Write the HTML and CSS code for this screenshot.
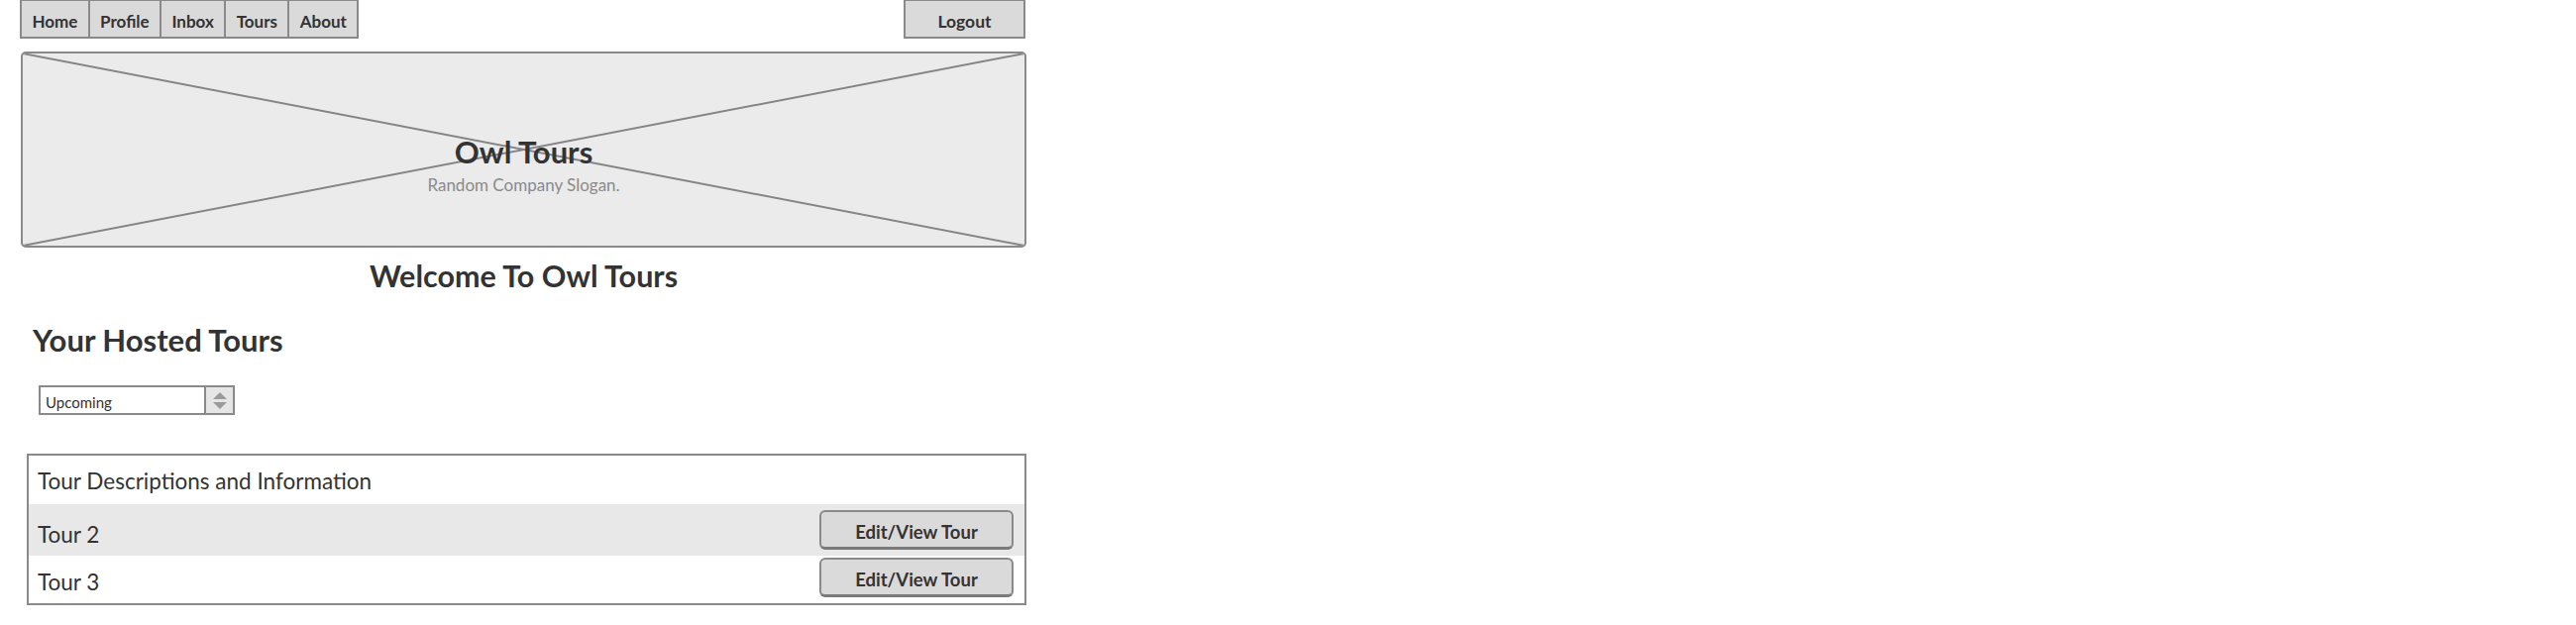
FILE: index.html
```html
<!DOCTYPE html>
<html>
<head>
<meta charset="utf-8">
<link rel="stylesheet" href="styles.css">
</head>
<body>
<div class="page">
  <div class="topbar">
    <nav class="nav">
      <span class="nav-item">Home</span>
      <span class="nav-item">Profile</span>
      <span class="nav-item">Inbox</span>
      <span class="nav-item">Tours</span>
      <span class="nav-item">About</span>
    </nav>
    <span class="logout">Logout</span>
  </div>

  <div class="banner">
    <svg class="banner-x" viewBox="0 0 100 100" preserveAspectRatio="none" aria-hidden="true">
      <line x1="0" y1="0" x2="100" y2="100" vector-effect="non-scaling-stroke"/>
      <line x1="100" y1="0" x2="0" y2="100" vector-effect="non-scaling-stroke"/>
    </svg>
    <div class="banner-title">Owl Tours</div>
    <div class="banner-slogan">Random Company Slogan.</div>
  </div>

  <h1 class="welcome">Welcome To Owl Tours</h1>

  <h2 class="section-title">Your Hosted Tours</h2>

  <div class="select">
    <span class="select-value">Upcoming</span>
    <span class="select-spin">
      <span class="tri-up"></span>
      <span class="tri-down"></span>
    </span>
  </div>

  <div class="tours">
    <div class="tour-row tour-head"><span class="tour-label">Tour Descriptions and Information</span></div>
    <div class="tour-row tour-alt">
      <span class="tour-label tour-label-2">Tour 2</span>
      <span class="btn btn-2">Edit/View Tour</span>
    </div>
    <div class="tour-row tour-last">
      <span class="tour-label tour-label-3">Tour 3</span>
      <span class="btn btn-3">Edit/View Tour</span>
    </div>
  </div>
</div>
</body>
</html>
```
FILE: styles.css
```css
* { box-sizing: border-box; }

body {
  margin: 0;
  background: #ffffff;
  font-family: "Lato", "Noto Sans", sans-serif;
  color: #333333;
}

.page {
  width: 1015px;
  margin-left: 21px;
}

/* top bar */
.topbar {
  display: flex;
  justify-content: space-between;
  align-items: flex-start;
}

.nav {
  display: flex;
  margin-left: -1px;
  height: 39px;
  border: 2px solid #8a8a8a;
  border-top-width: 1px;
  background: #dadada;
}

.nav-item {
  font-size: 17px;
  font-weight: 700;
  line-height: 20px;
  padding: 11px 10.4px 5px;
  border-left: 2px solid #8a8a8a;
}

.nav-item:first-child { border-left: none; }

.logout {
  width: 123px;
  height: 39px;
  margin-right: 1px;
  border: 2px solid #8a8a8a;
  border-top-width: 1px;
  background: #dadada;
  font-size: 17.5px;
  font-weight: 700;
  line-height: 20px;
  padding-top: 11px;
  text-align: center;
}

/* banner */
.banner {
  position: relative;
  margin-top: 13px;
  height: 198px;
  border: 2px solid #8a8a8a;
  border-radius: 5px;
  background: #ebebeb;
  display: flex;
  flex-direction: column;
  align-items: center;
  padding-top: 81px;
  overflow: hidden;
}

.banner-x {
  position: absolute;
  left: 0;
  top: 0;
  width: 100%;
  height: 100%;
}

.banner-x line {
  stroke: #858585;
  stroke-width: 2;
}

.banner-title {
  position: relative;
  font-size: 31px;
  font-weight: 700;
  line-height: 37px;
  color: #333333;
}

.banner-slogan {
  position: relative;
  margin-top: 5px;
  font-size: 17px;
  line-height: 20px;
  color: #8a8a8a;
}

/* headings */
.welcome {
  margin: 10px 0 0;
  text-align: center;
  font-size: 30.5px;
  font-weight: 700;
  line-height: 36px;
  color: #333333;
}

.section-title {
  margin: 29px 0 0;
  padding-left: 12px;
  font-size: 31px;
  font-weight: 700;
  line-height: 36px;
  color: #333333;
}

/* select */
.select {
  display: flex;
  margin: 28px 0 0 18px;
  width: 198px;
  height: 30px;
  border: 2px solid #8a8a8a;
  background: #ffffff;
}

.select-value {
  flex: 1;
  font-size: 15px;
  line-height: 18px;
  padding: 6px 0 0 5px;
  color: #333333;
}

.select-spin {
  width: 29px;
  border-left: 2px solid #8a8a8a;
  background: #e6e6e6;
  display: flex;
  flex-direction: column;
  align-items: center;
  justify-content: center;
  gap: 3px;
}

.tri-up,
.tri-down {
  width: 0;
  height: 0;
  border-left: 7px solid transparent;
  border-right: 7px solid transparent;
}

.tri-up { border-bottom: 7px solid #9a9a9a; }
.tri-down { border-top: 7px solid #9a9a9a; }

/* tours table */
.tours {
  margin: 39px 0 0 6px;
  width: 1009px;
  border: 2px solid #8a8a8a;
}

.tour-row {
  display: flex;
  justify-content: space-between;
  align-items: flex-start;
  padding: 0 11px 0 9px;
}

.tour-head { height: 49px; }
.tour-alt { height: 52px; background: #e8e8e8; }
.tour-last { height: 48px; }

.tour-label {
  font-size: 22.5px;
  line-height: 26px;
  color: #333333;
  margin-top: 13px;
}

.tour-label-2 { margin-top: 18px; }
.tour-label-3 { margin-top: 14px; }

.btn {
  width: 196px;
  height: 40px;
  border: 2px solid #8a8a8a;
  border-bottom-width: 3px;
  border-bottom-color: #7a7a7a;
  border-radius: 6px;
  background: #dadada;
  font-size: 18.5px;
  font-weight: 700;
  line-height: 20px;
  padding-top: 10px;
  text-align: center;
  color: #333333;
}

.btn-2 { margin-top: 6px; }
.btn-3 { margin-top: 2px; }
```
